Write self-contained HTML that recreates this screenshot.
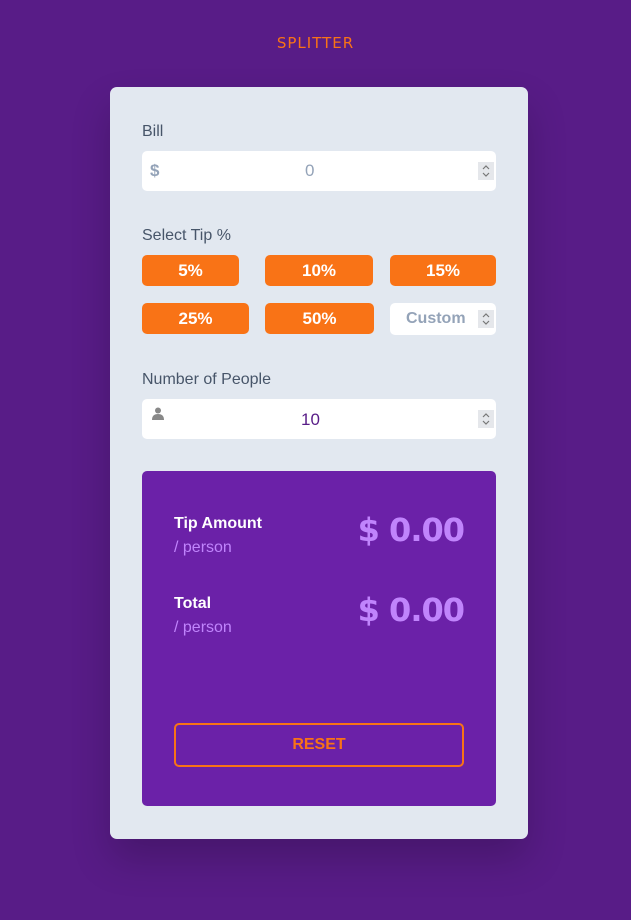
<!DOCTYPE html>
<html><head><style>
body{margin:0;width:631px;height:920px;background:#581c87;font-family:"Liberation Sans","DejaVu Sans",sans-serif;position:relative;overflow:hidden}
.a{position:absolute}
.title{left:0;width:631px;top:34px;text-align:center;color:#f97316;font-size:15px;letter-spacing:1px;font-family:"DejaVu Sans",sans-serif}
.card{left:110px;top:87px;width:418px;height:752px;background:#e2e8f0;border-radius:7px;box-shadow:0 20px 40px rgba(0,0,0,.2)}
.lbl{color:#475569;font-size:16px}
.inp{background:#fff;border-radius:5px;height:40px}
.spin{width:16px;height:18px;background:#e5e7eb}
.btn{background:#f97316;border-radius:5px;color:#fff;font-weight:bold;font-size:17px;text-align:center;height:31px;line-height:31px}
.res{left:142px;top:471px;width:354px;height:335px;background:#6b21a8;border-radius:5px}
.w{color:#fff;font-weight:bold;font-size:16px}
.p{color:#c084fc;font-size:16px}
.big{color:#c084fc;font-weight:bold;font-size:32px;text-align:right;letter-spacing:-1px;font-family:"DejaVu Sans",sans-serif}
</style></head><body>
<div class="a title">SPLITTER</div>
<div class="a card"></div>
<div class="a lbl" style="left:142px;top:123px">Bill</div>
<div class="a inp" style="left:142px;top:151px;width:354px"></div>
<div class="a" style="left:150px;top:161px;color:#94a3b8;font-size:17px;font-weight:bold">$</div>
<div class="a" style="left:305px;top:161px;color:#94a3b8;font-size:17px">0</div>
<svg class="a spin" style="left:478px;top:162px" viewBox="0 0 16 18"><path d="M5 7l3-3 3 3M5 11l3 3 3-3" stroke="#777" fill="none" stroke-width="1.2"/></svg>
<div class="a lbl" style="left:142px;top:227px">Select Tip %</div>
<div class="a btn" style="left:142px;top:255px;width:97px">5%</div>
<div class="a btn" style="left:265px;top:255px;width:108px">10%</div>
<div class="a btn" style="left:390px;top:255px;width:106px">15%</div>
<div class="a btn" style="left:142px;top:303px;width:107px">25%</div>
<div class="a btn" style="left:265px;top:303px;width:109px">50%</div>
<div class="a inp" style="left:390px;top:303px;width:106px;height:32px"></div>
<div class="a" style="left:406px;top:310px;color:#94a3b8;font-size:16px;font-weight:bold">Custom</div>
<svg class="a spin" style="left:478px;top:310px" viewBox="0 0 16 18"><path d="M5 7l3-3 3 3M5 11l3 3 3-3" stroke="#777" fill="none" stroke-width="1.2"/></svg>
<div class="a lbl" style="left:142px;top:371px">Number of People</div>
<div class="a inp" style="left:142px;top:399px;width:354px"></div>
<svg class="a" style="left:152px;top:407px" width="12" height="14"><circle cx="6" cy="3.5" r="3" fill="#888"/><path d="M0 13 Q0 7 6 7 Q12 7 12 13Z" fill="#888"/></svg>
<div class="a" style="left:301px;top:410px;color:#581c87;font-size:17px">10</div>
<svg class="a spin" style="left:478px;top:410px" viewBox="0 0 16 18"><path d="M5 7l3-3 3 3M5 11l3 3 3-3" stroke="#777" fill="none" stroke-width="1.2"/></svg>
<div class="a res"></div>
<div class="a w" style="left:174px;top:515px">Tip Amount</div>
<div class="a p" style="left:174px;top:539px">/ person</div>
<div class="a big" style="left:320px;top:511px;width:144px">$ 0.00</div>
<div class="a w" style="left:174px;top:595px">Total</div>
<div class="a p" style="left:174px;top:619px">/ person</div>
<div class="a big" style="left:320px;top:591px;width:144px">$ 0.00</div>
<div class="a" style="left:174px;top:723px;width:286px;height:40px;border:2px solid #f97316;border-radius:5px;color:#f97316;font-weight:bold;font-size:16px;text-align:center;line-height:40px">RESET</div>
</body></html>
